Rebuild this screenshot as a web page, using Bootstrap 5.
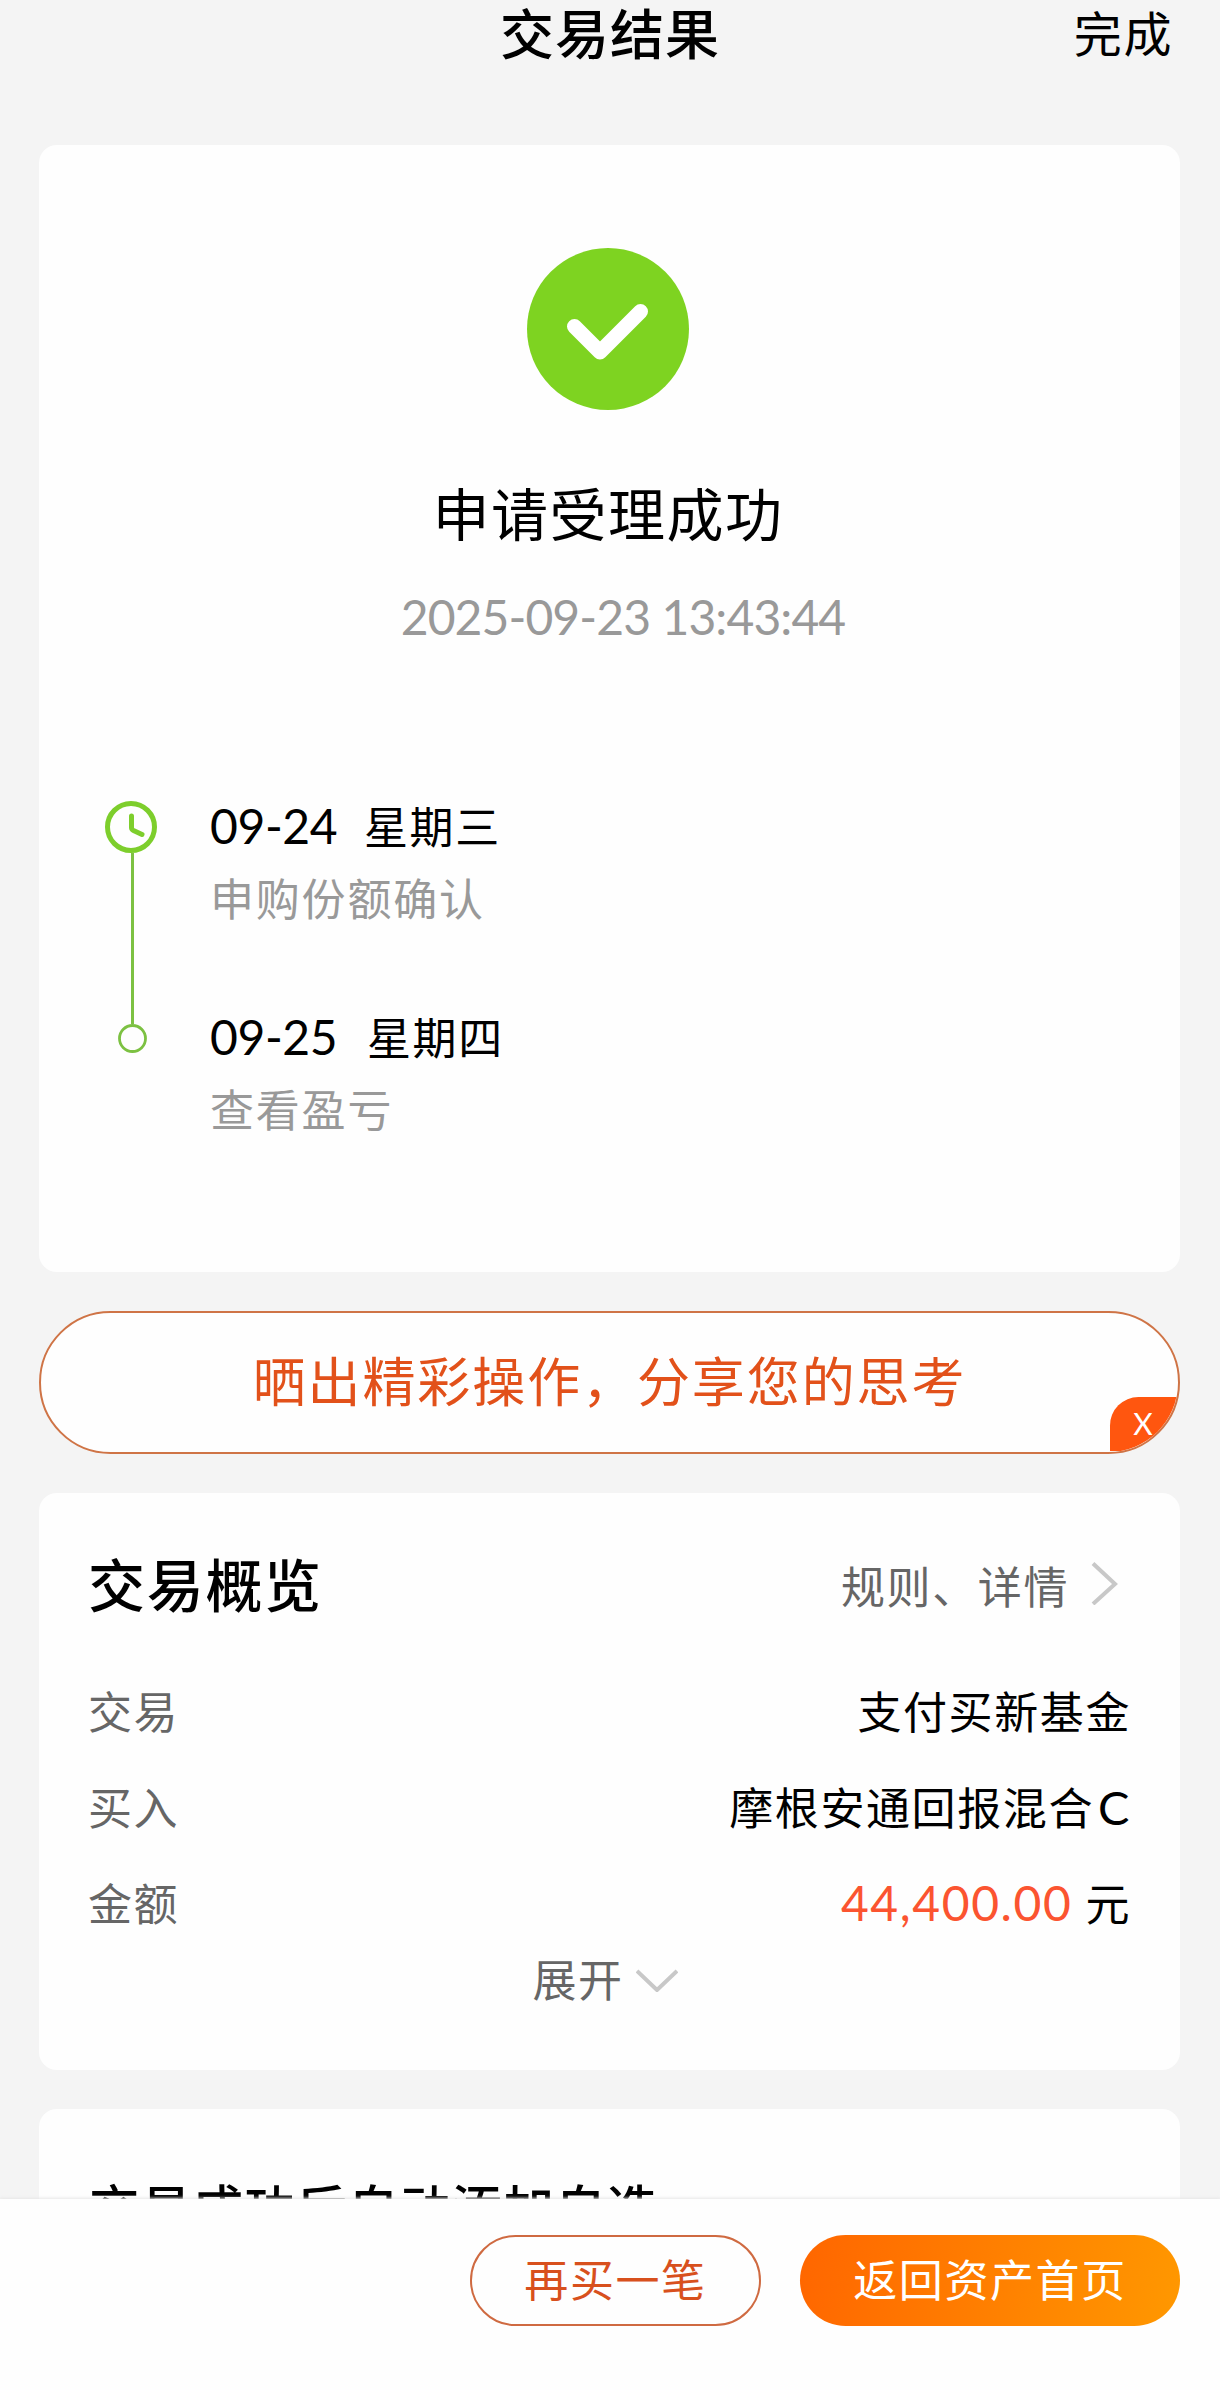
<!DOCTYPE html>
<html lang="zh-CN">
<head>
<meta charset="utf-8">
<meta name="viewport" content="width=device-width, initial-scale=1">
<title>交易结果</title>
<link rel="stylesheet" href="https://cdn.jsdelivr.net/npm/bootstrap@5.3.0/dist/css/bootstrap.min.css">
<style>
  body { background: #f4f4f4; color: #000; font-family: "Noto Sans CJK SC", sans-serif; font-size: 44px; line-height: 48px; letter-spacing: 1.6px; }
  .screen { height: 2390px; }
  .topbar { height: 145px; padding: 0 47px; }
  .topbar-title { font-size: 54px; font-weight: 500; line-height: 63px; letter-spacing: 1px; }
  .topbar-done { font-size: 48px; line-height: 62px; }
  .content { padding: 0 40px 0 39px; gap: 39px; }
  .panel { background: #fefefe; border-radius: 18px; }
  .num { font-family: Lato, sans-serif; }
  .muted { color: #999; }
  .label { color: #666; }
  .result { height: 1127px; padding-top: 103px; }
  .result-icon { width: 162px; height: 162px; margin-right: 3px; }
  .result-title { font-size: 57px; line-height: 60px; letter-spacing: 1.5px; margin: 71px 3px 0 0; }
  .result-time { font-size: 48px; line-height: 50px; letter-spacing: -.9px; margin: 51px 0 0 27px; }
  .timeline { margin-top: 159px; padding-left: 65px; }
  .rail { width: 54px; height: 252px; margin-right: 52px; }
  .step + .step { margin-top: 91px; }
  .step-date .num { font-size: 48px; letter-spacing: -.4px; width: 154px; }
  .step + .step .num { width: 157px; }
  .step-note { margin-top: 23px; letter-spacing: 1.8px; }
  .share { height: 143px; border: 2px solid #cf7446; border-radius: 72px; background: #fefefe; color: #e2511a; font-size: 53px; letter-spacing: 1.9px; padding-bottom: 8px; }
  .share-close { right: 0; bottom: 1px; width: 68px; height: 54px; border-radius: 38px 0 72px 0; background: #ff560f; color: #fff; font: 400 30px/52px Lato, sans-serif; }
  .overview { height: 577px; padding: 59px 49px 0 49px; }
  .overview-title { font-size: 57px; font-weight: 500; line-height: 60px; letter-spacing: 1.7px; margin: 0; }
  .detail-link { padding-top: 5px; }
  .detail-link svg { margin: 0 10px 0 22px; }
  .rows { margin-top: 74px; }
  .rows-line { height: 48px; margin-bottom: 48px; }
  .fund-class { font-size: 47px; }
  .amount { color: #fb5430; font-size: 48px; margin-right: 13px; letter-spacing: 1.600px; }
  .expand { margin-top: -20px; padding-right: 9px; }
  .expand svg { margin-left: 12px; }
  .watch { flex: 1; padding: 69px 50px 0; border-radius: 18px 18px 0 0; font-size: 50.500px; font-weight: 500; line-height: 54px; letter-spacing: 1.3px; height: 90px; }
  .actions { height: 191px; background: #fefefe; padding: 36px 40px 0 0; gap: 39px; box-shadow: 0 -1px 3px #e6e6e6; }
  .pill { height: 91px; padding: 0 0 6px; font-size: 44px; line-height: 48px; letter-spacing: 1.6px; }
  .pill-again { width: 291px; border: 2px solid #cf6a41; color: #d8501d; background: #fefefe; }
  .pill-home { width: 380px; border: 0; color: #fff; background: linear-gradient(100deg, #ff6600, #ff9800); }
</style>
</head>
<body>
<div class="screen d-flex flex-column overflow-hidden">
  <header class="topbar d-flex align-items-start flex-shrink-0">
    <div class="col"></div>
    <div class="topbar-title">交易结果</div>
    <div class="topbar-done col text-end">完成</div>
  </header>

  <main class="content d-flex flex-column flex-grow-1 overflow-hidden">
    <section class="panel result flex-shrink-0">
      <div class="d-flex flex-column align-items-center">
        <svg class="result-icon" viewBox="0 0 162 162"><circle cx="81" cy="81" r="81" fill="#7ed321"/><path d="M47.5 78.5 73 104 113.500 63.500" fill="none" stroke="#fff" stroke-width="15" stroke-linecap="round" stroke-linejoin="round"/></svg>
        <div class="result-title">申请受理成功</div>
        <div class="result-time num muted">2025-09-23 13:43:44</div>
      </div>
      <div class="timeline d-flex">
        <svg class="rail" viewBox="0 0 54 252" fill="none" stroke="#7dce2c"><path d="M28.500 52V223" stroke="#7cc142" stroke-width="3"/><circle cx="27" cy="26" r="23.500" stroke-width="5"/><path d="M27.500 15v11.500q0 2 2 3L38 33.500" stroke-width="5" stroke-linecap="round"/><circle cx="28.500" cy="237.500" r="13" stroke="#7cc142" stroke-width="2.800"/></svg>
        <div>
          <div class="step">
            <div class="step-date d-flex align-items-baseline"><span class="num">09-24</span><span>星期三</span></div>
            <div class="step-note muted">申购份额确认</div>
          </div>
          <div class="step">
            <div class="step-date d-flex align-items-baseline"><span class="num">09-25</span><span>星期四</span></div>
            <div class="step-note muted">查看盈亏</div>
          </div>
        </div>
      </div>
    </section>

    <section class="share position-relative d-flex align-items-center justify-content-center flex-shrink-0 overflow-hidden">
      <span>晒出精彩操作，分享您的思考</span>
      <span class="share-close position-absolute text-center">X</span>
    </section>

    <section class="panel overview flex-shrink-0">
      <div class="d-flex justify-content-between align-items-start">
        <h1 class="overview-title">交易概览</h1>
        <div class="detail-link label d-flex align-items-center"><span class="pt-1">规则、详情</span><svg width="30" height="44" viewBox="0 0 30 44"><path d="M2 2.500 24 23 2 43" fill="none" stroke="#c8c8c8" stroke-width="4"/></svg></div>
      </div>
      <div class="rows">
        <div class="rows-line d-flex justify-content-between"><span class="label">交易</span><span>支付买新基金</span></div>
        <div class="rows-line d-flex justify-content-between"><span class="label">买入</span><span>摩根安通回报混合<span class="num fund-class ms-1">C</span></span></div>
        <div class="rows-line d-flex justify-content-between"><span class="label">金额</span><span class="d-flex align-items-baseline"><span class="num amount">44,400.00</span><span>元</span></span></div>
      </div>
      <div class="expand label d-flex justify-content-center align-items-center">展开<svg width="42" height="28" viewBox="0 0 42 28"><path d="M1 7 21 26 41 7" fill="none" stroke="#c8c8c8" stroke-width="4"/></svg></div>
    </section>

    <section class="panel watch">交易成功后自动添加自选</section>
  </main>

  <footer class="actions d-flex justify-content-end flex-shrink-0 position-relative">
    <button type="button" class="pill pill-again btn rounded-pill">再买一笔</button>
    <button type="button" class="pill pill-home btn rounded-pill">返回资产首页</button>
  </footer>
</div>
<script src="https://cdn.jsdelivr.net/npm/bootstrap@5.3.0/dist/js/bootstrap.bundle.min.js"></script>
</body>
</html>
